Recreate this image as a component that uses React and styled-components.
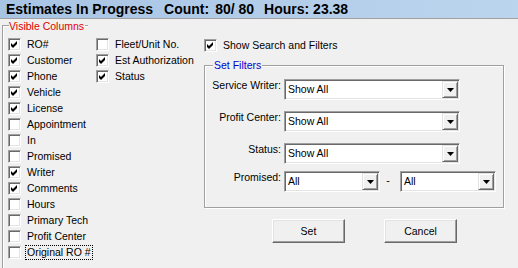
import styled, { createGlobalStyle } from 'styled-components';

// --- GLOBAL ---

const Global = createGlobalStyle`
  html, body {
    margin: 0;
    padding: 0;
    background: #f0f0f0;
    overflow: hidden;
  }
  body {
    font-family: "Liberation Sans", Arial, sans-serif;
    font-size: 10.5px;
    color: #000;
  }
`;

// --- STYLED COMPONENTS ---

const Window = styled.div`
  width: 518px;
  height: 268px;
  overflow: hidden;
  background: #f0f0f0;
`;

const TitleBar = styled.div`
  display: flex;
  align-items: center;
  height: 18px;
  padding-left: 6px;
  border-bottom: 1px solid #a0a0a0;
  background: linear-gradient(to right, #a8c4e4, #bcd5ee);
  font-size: 14px;
  font-weight: 700;
  line-height: 18px;
  white-space: pre;
`;

const TitlePart = styled.span`
  margin-left: ${(p) => p.$gap || 0}px;
`;

const Main = styled.div`
  display: flex;
  padding: 1px 0 0 2px;
`;

const LeftGroup = styled.div`
  width: 201px;
  height: 260px;
  margin-top: 5px;
  border-left: 1px solid #a0a0a0;
  box-shadow: inset 1px 0 0 #fff;
`;

const GroupTitle = styled.div`
  display: flex;
  align-items: flex-start;
  height: 13px;
  margin-top: -5px;
  line-height: 13px;
  color: #e00000;

  &::before,
  &::after {
    content: '';
    height: 1px;
    margin-top: 5px;
    background: #a0a0a0;
    box-shadow: 0 1px 0 #fff;
  }
  &::before {
    width: 6px;
  }
  &::after {
    width: 3px;
    margin-left: 1px;
  }
`;

const Columns = styled.div`
  display: flex;
  padding: 3px 0 0 5px;
`;

const Column = styled.div`
  display: flex;
  flex-direction: column;
  width: ${(p) => p.$width}px;
`;

const CheckRow = styled.div`
  display: flex;
  align-items: center;
  height: 16px;
`;

const Box = styled.span`
  display: flex;
  align-items: center;
  justify-content: center;
  flex: none;
  box-sizing: border-box;
  width: 13px;
  height: 13px;
  margin-right: 4px;
  background: #fff;
  border: 1px solid;
  border-color: #a0a0a0 #fff #fff #a0a0a0;
  box-shadow: inset 1px 1px 0 #696969, inset -1px -1px 0 #e3e3e3;
`;

const Caption = styled.span`
  padding: 0 1px;
  line-height: 13px;
  border: 1px dotted ${(p) => (p.$focus ? '#000' : 'transparent')};
`;

const RightPanel = styled.div`
  display: flex;
  flex-direction: column;
  width: 300px;
  padding-top: 17px;
`;

const GroupBox = styled.div`
  position: relative;
  margin-top: 12px;
  padding: 13px 0 15px;
  border: 1px solid #a0a0a0;
  box-shadow: inset 1px 1px 0 #fff, 1px 1px 0 #fff;
`;

const GroupLegend = styled.span`
  position: absolute;
  top: -7px;
  left: 8px;
  padding: 0 1px;
  line-height: 13px;
  background: #f0f0f0;
  color: #0000cc;
`;

const FilterRow = styled.div`
  display: flex;
  align-items: flex-start;
  margin-top: ${(p) => p.$mt || 0}px;
`;

const FieldLabel = styled.span`
  width: 76px;
  margin-right: 3px;
  text-align: right;
  line-height: 13px;
`;

const Combo = styled.div`
  display: flex;
  box-sizing: border-box;
  width: ${(p) => p.$width}px;
  height: 21px;
  padding: 1px;
  background: #fff;
  border: 1px solid;
  border-color: #a0a0a0 #fff #fff #a0a0a0;
  box-shadow: inset 1px 1px 0 #696969, inset -1px -1px 0 #e3e3e3;
`;

const ComboText = styled.span`
  flex: 1;
  padding-left: 2px;
  line-height: 17px;
  overflow: hidden;
  white-space: nowrap;
`;

const DropButton = styled.span`
  display: flex;
  align-items: center;
  justify-content: center;
  box-sizing: border-box;
  width: 16px;
  height: 17px;
  background: #f0f0f0;
  border: 1px solid;
  border-color: #e3e3e3 #696969 #696969 #e3e3e3;
  box-shadow: inset 1px 1px 0 #fff, inset -1px -1px 0 #a0a0a0;
`;

const Dash = styled.span`
  width: 16px;
  margin-right: 4px;
  padding-top: 3px;
  text-align: center;
  line-height: 13px;
`;

const ButtonRow = styled.div`
  display: flex;
  gap: 39px;
  margin-top: 11px;
  padding-left: 68px;
`;

const Button = styled.button`
  box-sizing: border-box;
  width: 73px;
  height: 24px;
  padding: 0;
  background: #f0f0f0;
  border: 1px solid;
  border-color: #fff #696969 #696969 #fff;
  box-shadow: inset -1px -1px 0 #a0a0a0, inset 1px 1px 0 #e3e3e3;
  font: inherit;
  color: #000;
`;

// --- DATA ---

const firstColumn = [
  ['RO#', true],
  ['Customer', true],
  ['Phone', true],
  ['Vehicle', true],
  ['License', true],
  ['Appointment', false],
  ['In', false],
  ['Promised', false],
  ['Writer', true],
  ['Comments', true],
  ['Hours', false],
  ['Primary Tech', false],
  ['Profit Center', false],
  ['Original RO #', false, true],
];

const secondColumn = [
  ['Fleet/Unit No.', false],
  ['Est Authorization', true],
  ['Status', true],
];

// --- COMPONENTS ---

function Check({ label, checked, focus }) {
  return (
    <CheckRow>
      <Box>
        {checked && (
          <svg width="7" height="7" viewBox="0 0 7 7">
            <polygon points="0,2 2,4 6,0 6,3 2,7 0,5" fill="#000" />
          </svg>
        )}
      </Box>
      <Caption $focus={focus}>{label}</Caption>
    </CheckRow>
  );
}

function ComboBox({ width, value }) {
  return (
    <Combo $width={width}>
      <ComboText>{value}</ComboText>
      <DropButton>
        <svg width="7" height="4" viewBox="0 0 7 4">
          <polygon points="0,0 7,0 3.5,4" fill="#000" />
        </svg>
      </DropButton>
    </Combo>
  );
}

export default function App() {
  return (
    <Window>
      <Global />
      <TitleBar>
        <TitlePart>Estimates In Progress</TitlePart>
        <TitlePart $gap={11}>Count:</TitlePart>
        <TitlePart $gap={6}>80/ 80</TitlePart>
        <TitlePart $gap={10}>Hours: 23.38</TitlePart>
      </TitleBar>

      <Main>
        <LeftGroup>
          <GroupTitle>Visible Columns</GroupTitle>
          <Columns>
            <Column $width={88}>
              {firstColumn.map(([label, checked, focus]) => (
                <Check key={label} label={label} checked={checked} focus={focus} />
              ))}
            </Column>
            <Column $width={108}>
              {secondColumn.map(([label, checked]) => (
                <Check key={label} label={label} checked={checked} />
              ))}
            </Column>
          </Columns>
        </LeftGroup>

        <RightPanel>
          <Check label="Show Search and Filters" checked />
          <GroupBox>
            <GroupLegend>Set Filters</GroupLegend>
            <FilterRow>
              <FieldLabel>Service Writer:</FieldLabel>
              <ComboBox width={176} value="Show All" />
            </FilterRow>
            <FilterRow $mt={11}>
              <FieldLabel>Profit Center:</FieldLabel>
              <ComboBox width={176} value="Show All" />
            </FilterRow>
            <FilterRow $mt={11}>
              <FieldLabel>Status:</FieldLabel>
              <ComboBox width={176} value="Show All" />
            </FilterRow>
            <FilterRow $mt={7}>
              <FieldLabel>Promised:</FieldLabel>
              <ComboBox width={96} value="All" />
              <Dash>-</Dash>
              <ComboBox width={96} value="All" />
            </FilterRow>
          </GroupBox>
          <ButtonRow>
            <Button>Set</Button>
            <Button>Cancel</Button>
          </ButtonRow>
        </RightPanel>
      </Main>
    </Window>
  );
}
